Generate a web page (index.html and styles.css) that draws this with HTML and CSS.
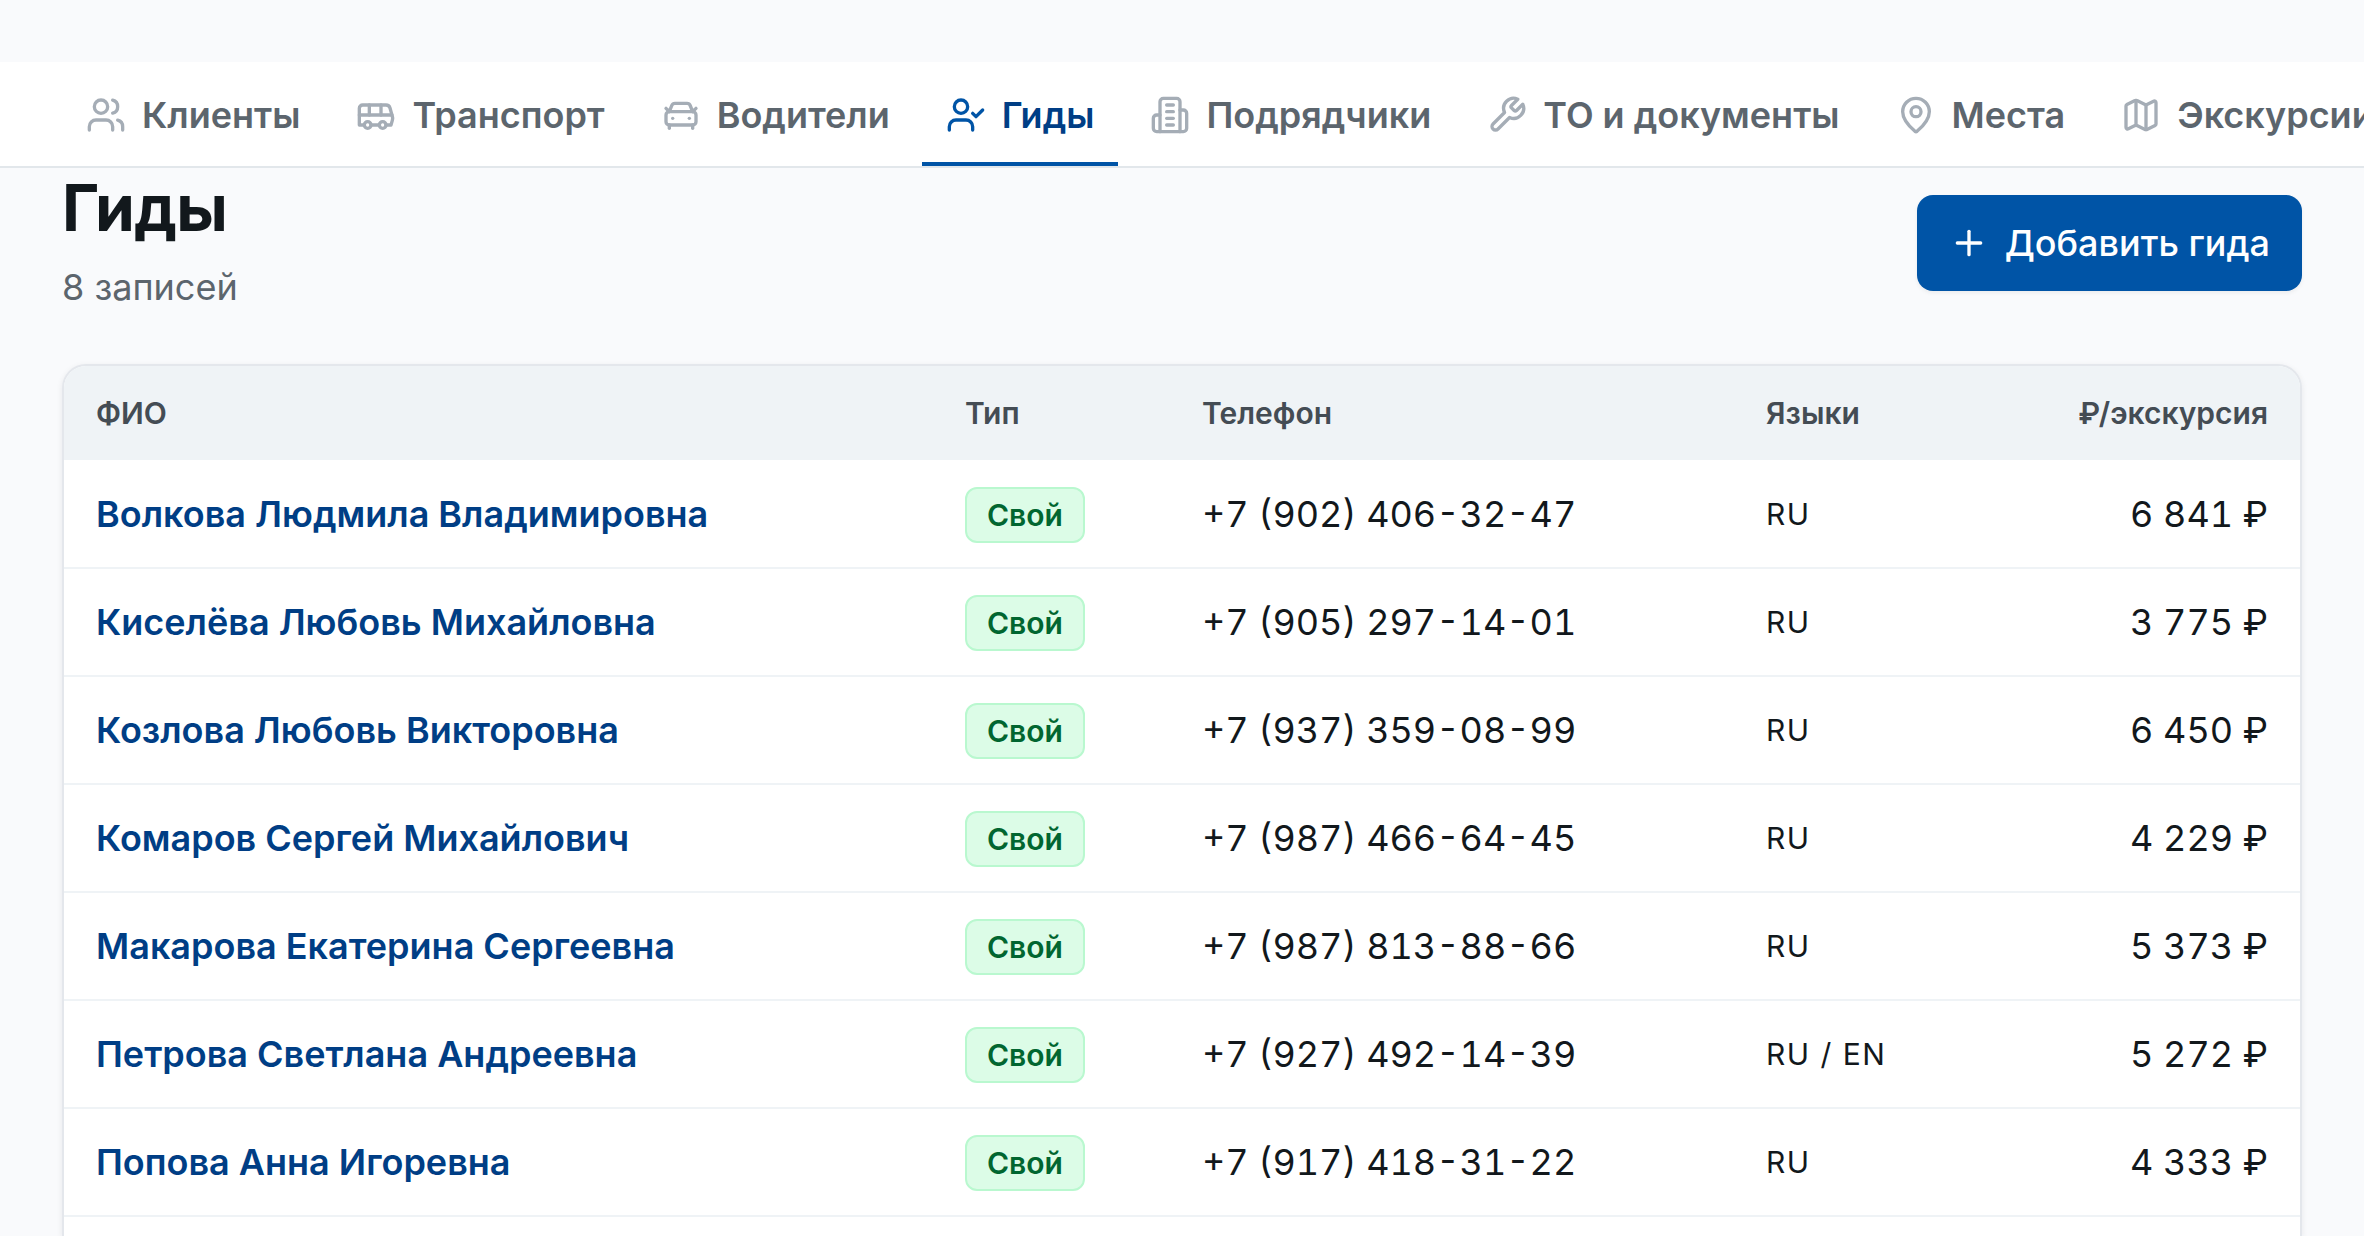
FILE: index.html
```html
<!DOCTYPE html>
<html lang="ru">
<head>
    <meta charset="UTF-8">
    <title>Гиды</title>
    <link rel="stylesheet" href="styles.css">
</head>
<body>
<nav class="tabs">
    <a class="tab" href="#">
        <svg class="icon" viewBox="0 0 24 24"><path d="M16 21v-2a4 4 0 0 0-4-4H6a4 4 0 0 0-4 4v2"/><circle cx="9" cy="7" r="4"/><path d="M22 21v-2a4 4 0 0 0-3-3.87"/><path d="M16 3.13a4 4 0 0 1 0 7.75"/></svg>
        Клиенты
    </a>
    <a class="tab" href="#">
        <svg class="icon" viewBox="0 0 24 24"><path d="M8 6v6"/><path d="M15 6v6"/><path d="M2 12h19.6"/><path d="M18 18h3s.5-1.700.8-2.800c.1-.4.2-.8.2-1.200 0-.4-.1-.8-.2-1.200l-1.400-5C20.100 6.800 19.100 6 18 6H4a2 2 0 0 0-2 2v10h3"/><circle cx="7" cy="18" r="2"/><path d="M9 18h5"/><circle cx="16" cy="18" r="2"/></svg>
        Транспорт
    </a>
    <a class="tab" href="#">
        <svg class="icon" viewBox="0 0 24 24"><path d="m21 8-2 2-1.500-3.700A2 2 0 0 0 15.646 5H8.400a2 2 0 0 0-1.903 1.257L5 10 3 8"/><path d="M7 14h.01"/><path d="M17 14h.01"/><rect width="18" height="8" x="3" y="10" rx="2"/><path d="M5 18v2"/><path d="M19 18v2"/></svg>
        Водители
    </a>
    <a class="tab active" href="#" aria-current="page">
        <svg class="icon" viewBox="0 0 24 24"><path d="m16 11 2 2 4-4"/><path d="M16 21v-2a4 4 0 0 0-4-4H6a4 4 0 0 0-4 4v2"/><circle cx="9" cy="7" r="4"/></svg>
        Гиды
    </a>
    <a class="tab" href="#">
        <svg class="icon" viewBox="0 0 24 24"><path d="M6 22V4a2 2 0 0 1 2-2h8a2 2 0 0 1 2 2v18Z"/><path d="M6 12H4a2 2 0 0 0-2 2v6a2 2 0 0 0 2 2h2"/><path d="M18 9h2a2 2 0 0 1 2 2v9a2 2 0 0 1-2 2h-2"/><path d="M10 6h4"/><path d="M10 10h4"/><path d="M10 14h4"/><path d="M10 18h4"/></svg>
        Подрядчики
    </a>
    <a class="tab" href="#">
        <svg class="icon" viewBox="0 0 24 24"><path d="M14.700 6.300a1 1 0 0 0 0 1.400l1.600 1.600a1 1 0 0 0 1.400 0l3.770-3.770a6 6 0 0 1-7.940 7.940l-6.910 6.910a2.120 2.120 0 0 1-3-3l6.910-6.910a6 6 0 0 1 7.940-7.940l-3.760 3.760z"/></svg>
        ТО и документы
    </a>
    <a class="tab" href="#">
        <svg class="icon" viewBox="0 0 24 24"><path d="M20 10c0 4.993-5.539 10.193-7.399 11.799a1 1 0 0 1-1.202 0C9.539 20.193 4 14.993 4 10a8 8 0 0 1 16 0"/><circle cx="12" cy="10" r="3"/></svg>
        Места
    </a>
    <a class="tab" href="#">
        <svg class="icon" viewBox="0 0 24 24"><path d="M14.106 5.553a2 2 0 0 0 1.788 0l3.659-1.830A1 1 0 0 1 21 4.619v12.764a1 1 0 0 1-.553.894l-4.553 2.277a2 2 0 0 1-1.788 0l-4.212-2.106a2 2 0 0 0-1.788 0l-3.659 1.830A1 1 0 0 1 3 19.381V6.618a1 1 0 0 1 .553-.894l4.553-2.277a2 2 0 0 1 1.788 0z"/><path d="M15 5.764v15"/><path d="M9 3.236v15"/></svg>
        Экскурсии
    </a>
</nav>
<main class="page">
    <header class="page-header">
        <div>
            <h1>Гиды</h1>
            <p class="count">8 записей</p>
        </div>
        <button class="add" type="button">
            <svg class="plus" viewBox="0 0 24 24"><path d="M5 12h14"/><path d="M12 5v14"/></svg>
            Добавить гида
        </button>
    </header>
    <div class="card">
        <table class="guides">
            <colgroup>
                <col class="col-name">
                <col class="col-type">
                <col class="col-phone">
                <col class="col-lang">
                <col class="col-price">
            </colgroup>
            <thead>
            <tr><th>ФИО</th><th>Тип</th><th>Телефон</th><th>Языки</th><th class="price">₽/экскурсия</th></tr>
            </thead>
            <tbody>
            <tr>
                <td><a class="name" href="#">Волкова Людмила Владимировна</a></td>
                <td><span class="badge">Свой</span></td>
                <td class="phone">+7 (902) 406-32-47</td>
                <td class="lang">RU</td>
                <td class="price">6 841 ₽</td>
            </tr>
            <tr>
                <td><a class="name" href="#">Киселёва Любовь Михайловна</a></td>
                <td><span class="badge">Свой</span></td>
                <td class="phone">+7 (905) 297-14-01</td>
                <td class="lang">RU</td>
                <td class="price">3 775 ₽</td>
            </tr>
            <tr>
                <td><a class="name" href="#">Козлова Любовь Викторовна</a></td>
                <td><span class="badge">Свой</span></td>
                <td class="phone">+7 (937) 359-08-99</td>
                <td class="lang">RU</td>
                <td class="price">6 450 ₽</td>
            </tr>
            <tr>
                <td><a class="name" href="#">Комаров Сергей Михайлович</a></td>
                <td><span class="badge">Свой</span></td>
                <td class="phone">+7 (987) 466-64-45</td>
                <td class="lang">RU</td>
                <td class="price">4 229 ₽</td>
            </tr>
            <tr>
                <td><a class="name" href="#">Макарова Екатерина Сергеевна</a></td>
                <td><span class="badge">Свой</span></td>
                <td class="phone">+7 (987) 813-88-66</td>
                <td class="lang">RU</td>
                <td class="price">5 373 ₽</td>
            </tr>
            <tr>
                <td><a class="name" href="#">Петрова Светлана Андреевна</a></td>
                <td><span class="badge">Свой</span></td>
                <td class="phone">+7 (927) 492-14-39</td>
                <td class="lang">RU / EN</td>
                <td class="price">5 272 ₽</td>
            </tr>
            <tr>
                <td><a class="name" href="#">Попова Анна Игоревна</a></td>
                <td><span class="badge">Свой</span></td>
                <td class="phone">+7 (917) 418-31-22</td>
                <td class="lang">RU</td>
                <td class="price">4 333 ₽</td>
            </tr>
            </tbody>
        </table>
    </div>
</main>
</body>
</html>
```

FILE: styles.css
```css
* {
    box-sizing: border-box;
}

body {
    margin: 0;
    padding-top: 62px;
    height: 100vh;
    overflow: hidden;
    display: flex;
    flex-direction: column;
    background: #f9fafc;
    color: #12181c;
    font-family: Inter, "Liberation Sans", sans-serif;
    font-size: 36px;
    line-height: 54px;
}

.tabs {
    display: flex;
    flex: none;
    gap: 8px;
    padding: 0 62px;
    overflow: hidden;
    background: #fff;
    border-bottom: 2px solid #e2e7eb;
}

.tab {
    display: flex;
    flex: none;
    align-items: center;
    gap: 16px;
    height: 104px;
    padding: 6px 24px 0;
    border-bottom: 4px solid transparent;
    color: #5c656d;
    font-weight: 600;
    text-decoration: none;
    white-space: nowrap;
}

.icon,
.plus {
    flex: none;
    width: 40px;
    height: 40px;
    fill: none;
    stroke: currentColor;
    stroke-width: 2;
    stroke-linecap: round;
    stroke-linejoin: round;
}

.icon {
    color: #a5adb6;
}

.active {
    border-color: #0054a6;
    color: #003e85;
}

.active .icon {
    color: #0054a6;
}

.page {
    flex: 1;
    min-height: 0;
    display: flex;
    flex-direction: column;
    padding: 0 62px;
}

.page-header {
    display: flex;
    justify-content: space-between;
    align-items: center;
    padding: 4px 0 50px;
}

h1 {
    margin: 0;
    font-size: 64px;
    font-weight: 700;
    line-height: 72px;
    letter-spacing: -0.01em;
}

.count {
    margin: 16px 0 0;
    color: #5c656d;
}

.add {
    display: flex;
    align-items: center;
    gap: 16px;
    height: 96px;
    padding: 0 32px;
    border: 0;
    border-radius: 16px;
    background: #0054a6;
    box-shadow: 0 2px 4px rgba(0, 0, 0, .06);
    color: #fff;
    font: inherit;
    font-weight: 500;
}

.card {
    flex: 1;
    min-height: 0;
    overflow: hidden;
    background: #fff;
    border: 2px solid #e4e7ec;
    border-bottom: 0;
    border-radius: 24px 24px 0 0;
    box-shadow: 0 2px 6px rgba(16, 24, 40, .08);
}

.guides {
    width: 100%;
    table-layout: fixed;
    border-collapse: collapse;
}

/* name column takes the rest */
.col-type {
    width: 237px;
}

.col-phone {
    width: 564px;
}

.col-lang {
    width: 282px;
}

.col-price {
    width: 284px;
}

th,
td {
    padding: 0 32px;
    text-align: left;
    white-space: nowrap;
}

th {
    height: 94px;
    background: #eff3f6;
    color: #444c54;
    font-size: 30px;
    font-weight: 600;
}

td {
    height: 108px;
    border-bottom: 2px solid #eff3f6;
}

.name {
    color: #003e85;
    font-weight: 600;
    text-decoration: none;
}

.badge {
    display: inline-block;
    padding: 4px 20px;
    border: 2px solid #b9f8cf;
    border-radius: 12px;
    background: #dcfce7;
    color: #016630;
    font-size: 30px;
    font-weight: 600;
    line-height: 44px;
    vertical-align: middle;
}

.phone {
    font-variant-numeric: tabular-nums;
}

.lang {
    font-size: 30px;
    letter-spacing: 0.05em;
}

.price {
    text-align: right;
}

td.price {
    font-variant-numeric: tabular-nums;
}
```
